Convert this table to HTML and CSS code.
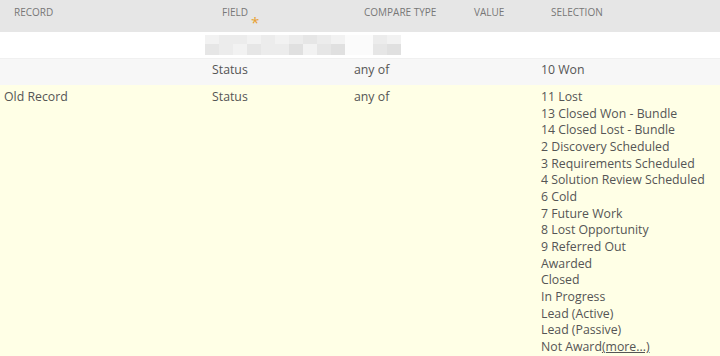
FILE: index.html
```html
<!DOCTYPE html>
<html>
<head>
<meta charset="utf-8">
<link rel="stylesheet" href="styles.css">
</head>
<body>
<div class="table">
  <div class="row head">
    <div class="cell c1">RECORD</div>
    <div class="cell c2">FIELD<span class="req">*</span></div>
    <div class="cell c3">COMPARE TYPE</div>
    <div class="cell c4">VALUE</div>
    <div class="cell c5">SELECTION</div>
  </div>
  <div class="row blur-row">
    <div class="blur">
      <div class="blk-row">
        <i class="b1"></i><i class="b2"></i><i class="b2"></i><i class="b1"></i><i class="b2"></i><i class="b1"></i><i class="b2"></i><i class="b3"></i><i class="b2"></i><i class="b1"></i><i class="b0"></i><i class="b0"></i><i class="b2"></i><i class="b1"></i>
      </div>
      <div class="blk-row">
        <i class="b3"></i><i class="b2"></i><i class="b1"></i><i class="b3"></i><i class="b2"></i><i class="b2"></i><i class="b4"></i><i class="b1"></i><i class="b3"></i><i class="b4"></i><i class="b0"></i><i class="b0"></i><i class="b3"></i><i class="b4"></i>
      </div>
    </div>
  </div>
  <div class="row alt">
    <div class="cell c1"></div>
    <div class="cell c2">Status</div>
    <div class="cell c3">any of</div>
    <div class="cell c4"></div>
    <div class="cell c5">10 Won</div>
  </div>
  <div class="row hl">
    <div class="cell c1">Old Record</div>
    <div class="cell c2">Status</div>
    <div class="cell c3">any of</div>
    <div class="cell c4"></div>
    <div class="cell c5 list">
      <div>11 Lost</div>
      <div>13 Closed Won - Bundle</div>
      <div>14 Closed Lost - Bundle</div>
      <div>2 Discovery Scheduled</div>
      <div>3 Requirements Scheduled</div>
      <div>4 Solution Review Scheduled</div>
      <div>6 Cold</div>
      <div>7 Future Work</div>
      <div>8 Lost Opportunity</div>
      <div>9 Referred Out</div>
      <div>Awarded</div>
      <div>Closed</div>
      <div>In Progress</div>
      <div>Lead (Active)</div>
      <div>Lead (Passive)</div>
      <div>Not Award<a class="more" href="#">(more...)</a></div>
    </div>
  </div>
</div>
</body>
</html>
```

FILE: styles.css
```css
html, body {
  margin: 0;
  padding: 0;
  background: #ffffff;
}
body {
  font-family: "Open Sans", sans-serif;
  font-size: 12.3px;
  color: #555555;
  width: 720px;
  height: 356px;
  overflow: hidden;
}
.table {
  display: flex;
  flex-direction: column;
}
.row {
  display: grid;
  grid-template-columns: 208px 142px 110px 77px 1fr;
}
.cell {
  padding-left: 4px;
  white-space: nowrap;
}
.head {
  background: #e6e6e6;
  height: 32px;
  font-size: 10px;
  color: #777777;
}
.head .cell {
  padding-left: 14px;
  padding-top: 5px;
  line-height: 14px;
  position: relative;
}
.req {
  position: absolute;
  left: 43px;
  top: 15px;
  color: #e8a030;
  font-size: 15px;
  line-height: 15px;
}
.blur-row {
  display: block;
  height: 26px;
  background: #ffffff;
  border-bottom: 1px solid #f0f0f0;
}
.blur {
  margin-left: 205px;
  padding-top: 3px;
  display: flex;
  flex-direction: column;
}
.blk-row {
  display: flex;
}
.blk-row i {
  display: block;
  width: 14px;
  height: 9px;
}
.blk-row + .blk-row i {
  height: 11px;
}
.b0 { background: #fbfbfb; }
.b1 { background: #f2f2f2; }
.b2 { background: #ececec; }
.b3 { background: #e6e6e6; }
.b4 { background: #e0e0e0; }
.alt {
  background: #f7f7f7;
  height: 26px;
  line-height: 16px;
}
.alt .cell {
  padding-top: 3px;
}
.hl {
  background: #ffffe6;
  min-height: 280px;
  line-height: 16.67px;
}
.hl .cell {
  padding-top: 4px;
}
.more {
  color: #555555;
  text-decoration: underline;
}
```
